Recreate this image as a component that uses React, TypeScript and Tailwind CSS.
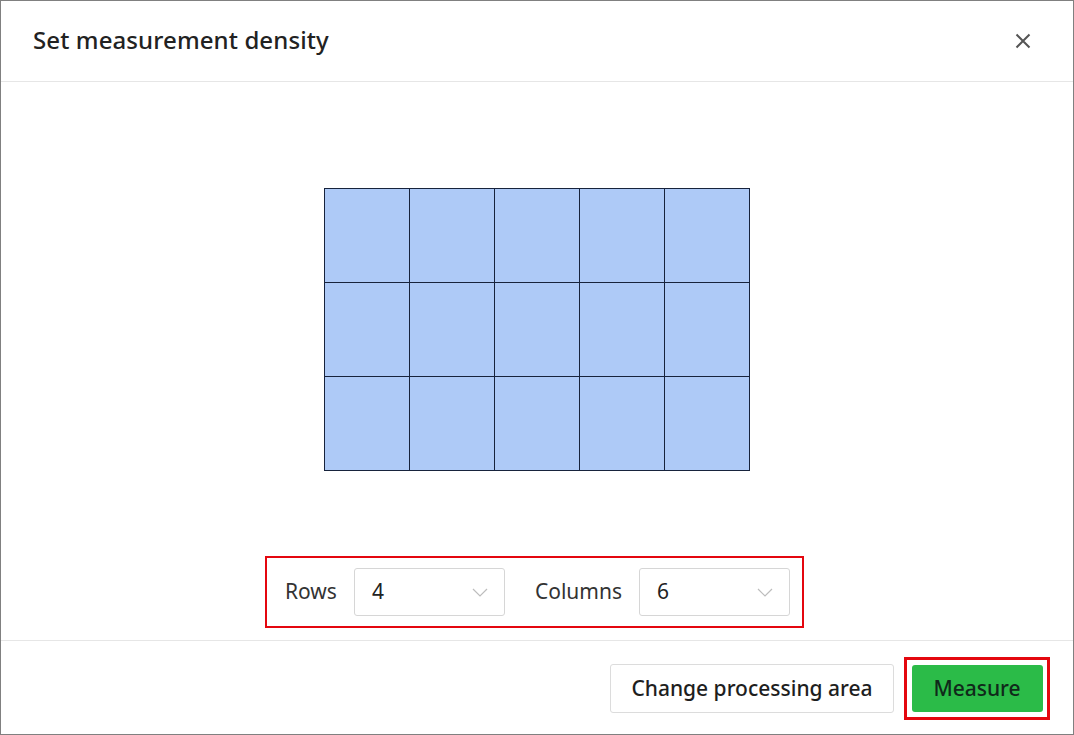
import React, { useState } from 'react';

// Measurement density dialog

const ROWS = 3;
const COLS = 5;

const CloseIcon = () => (
  <svg width="16" height="16" viewBox="0 0 16 16" fill="none" stroke="#555" strokeWidth={2}>
    <path d="M1.5 1.5l13 13M14.5 1.5l-13 13" />
  </svg>
);

const Chevron = () => (
  <svg width="16" height="9" viewBox="0 0 16 9" fill="none" stroke="#bdbdbd" strokeWidth={1.2}>
    <path d="M1 1l7 7 7-7" />
  </svg>
);

const SelectBox: React.FC<{ value: string }> = ({ value }) => (
  <div className="w-[151px] h-[48px] border border-[#d6d6d6] rounded-[3px] flex items-center justify-between pl-[17px] pr-[16px] text-[21px] text-[#222]">
    <span>{value}</span>
    <Chevron />
  </div>
);

export default function App() {
  const [rows] = useState('4');
  const [cols] = useState('6');
  const cells = Array.from({ length: ROWS * COLS });

  return (
    <div className="w-[1074px] h-[735px] bg-white border border-[#808080] flex flex-col font-['Noto_Sans',sans-serif] text-[#222]">
      <header className="h-[81px] shrink-0 border-b border-[#e6e6e6] flex items-center justify-between pl-[32px] pr-[42px] pb-[3px]">
        <h1 className="text-[24px] font-medium text-[#222] tracking-[0.1px]">Set measurement density</h1>
        <button className="w-[16px] h-[16px] mt-[2px]"><CloseIcon /></button>
      </header>

      <main className="flex-1 flex flex-col items-center pt-[106px]">
        <div className="grid grid-cols-[repeat(5,85px)] grid-rows-[repeat(3,94px)] border-l border-t border-[#17233c]">
          {cells.map((_, i) => (
            <div key={i} className="bg-[#aecaf7] border-r border-b border-[#17233c]" />
          ))}
        </div>

        <div className="mt-[85px] ml-[-5px] w-[539px] h-[72px] border-[2.5px] border-[#e4070f] flex items-center pl-[18px] text-[21px] text-[#333]">
          <span className="mr-[17px]">Rows</span>
          <SelectBox value={rows} />
          <span className="ml-[30px] mr-[17px]">Columns</span>
          <SelectBox value={cols} />
        </div>
      </main>

      <footer className="h-[94px] shrink-0 border-t border-[#e6e6e6] flex items-center justify-end pr-[23px] pt-[2px]">
        <button className="w-[284px] h-[49px] border border-[#dcdcdc] rounded-[3px] text-[21px] font-medium text-[#1e1e1e] mr-[10px]">
          Change processing area
        </button>
        <div className="w-[146px] h-[63px] border-[3px] border-[#e4070f] flex items-center justify-center">
          <button className="w-[131px] h-[47px] bg-[#2bbb48] rounded-[3px] text-[21px] font-medium text-[#10291a]">
            Measure
          </button>
        </div>
      </footer>
    </div>
  );
}
